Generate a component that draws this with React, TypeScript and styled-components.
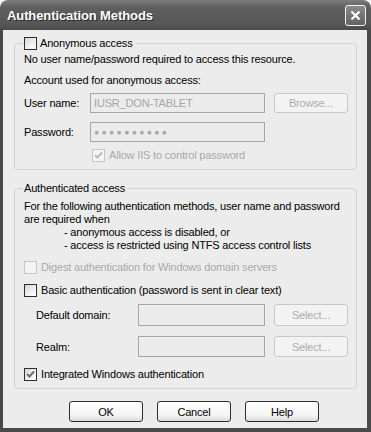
import styled, { createGlobalStyle } from "styled-components";

const GlobalStyle = createGlobalStyle`
  html, body {
    margin: 0;
    padding: 0;
    background: #ffffff;
  }
  body {
    font-family: "Liberation Sans", Arial, sans-serif;
    font-size: 11px;
    letter-spacing: -0.18px;
    color: #000;
  }
`;

const Window = styled.div`
  width: 371px;
  height: 432px;
  box-sizing: border-box;
  display: flex;
  flex-direction: column;
  background: linear-gradient(180deg, #7c7c7c 0px, #5e5e5e 8px, #575757 24px, #4a4a4a 30px);
  border-radius: 8px 8px 0 0;
  overflow: hidden;
`;

const TitleBar = styled.div`
  height: 30px;
  flex: 0 0 30px;
  display: flex;
  align-items: center;
  justify-content: space-between;
  padding: 0 5px 0 7px;
  box-sizing: border-box;
`;

const Title = styled.span`
  font-family: "Liberation Sans", Arial, sans-serif;
  font-weight: bold;
  font-size: 13px;
  letter-spacing: -0.1px;
  color: #ffffff;
  text-shadow: 1px 1px 0 #2a2a2a;
  padding-top: 1px;
`;

const CloseButton = styled.div`
  width: 21px;
  height: 21px;
  box-sizing: border-box;
  border: 1px solid #f4f4f4;
  border-radius: 3px;
  background: linear-gradient(180deg, #8a8a8a, #626262);
  display: flex;
  align-items: center;
  justify-content: center;
  margin-top: 1px;
`;

const Client = styled.div`
  flex: 1;
  margin: 0 4px 4px 3px;
  background: #ececec;
  padding: 7px 10px 0 11px;
  display: flex;
  flex-direction: column;
`;

const Group = styled.fieldset<{ $top?: number }>`
  margin: ${(p) => p.$top ?? 0}px 0 0 0;
  padding: 0 8px 7px 9px;
  border: 1px solid #d2d2d2;
  border-radius: 4px;
  display: flex;
  flex-direction: column;
  min-width: 0;
`;

const Legend = styled.legend`
  padding: 0 2px 0 1px;
  margin-left: -1px;
  height: 13px;
  line-height: 13px;
  display: flex;
  align-items: center;
  gap: 3px;
  color: #000;
`;

const Line = styled.div<{ $top: number; $indent?: number }>`
  margin-top: ${(p) => p.$top}px;
  margin-left: ${(p) => p.$indent ?? 0}px;
  line-height: 13px;
  height: 13px;
  white-space: nowrap;
`;

const Paragraph = styled.div<{ $top: number }>`
  margin-top: ${(p) => p.$top}px;
  line-height: 13px;
  white-space: nowrap;
`;

const CheckRow = styled.label<{ $top: number; $indent?: number; $disabled?: boolean }>`
  margin-top: ${(p) => p.$top}px;
  margin-left: ${(p) => p.$indent ?? 0}px;
  height: 13px;
  line-height: 13px;
  display: flex;
  align-items: center;
  gap: 4px;
  white-space: nowrap;
  color: ${(p) => (p.$disabled ? "#a9a9a9" : "#000")};
`;

const Box = styled.span<{ $disabled?: boolean }>`
  width: 13px;
  height: 13px;
  box-sizing: border-box;
  flex: 0 0 13px;
  border: 1px solid ${(p) => (p.$disabled ? "#c6c6c6" : "#2e2e2e")};
  background: ${(p) =>
    p.$disabled
      ? "#f4f4f4"
      : "linear-gradient(135deg, #d6d6d6 0%, #f2f2f2 60%, #ffffff 100%)"};
  display: flex;
  align-items: center;
  justify-content: center;
`;

const FieldRow = styled.div<{ $top: number; $height: number; $labelWidth: number; $indent?: number }>`
  margin-top: ${(p) => p.$top}px;
  margin-left: ${(p) => p.$indent ?? 0}px;
  height: ${(p) => p.$height}px;
  display: grid;
  grid-template-columns: ${(p) => p.$labelWidth}px 1fr 74px;
  column-gap: 9px;
  align-items: stretch;
`;

const FieldLabel = styled.span`
  display: flex;
  align-items: center;
  white-space: nowrap;
`;

const TextBox = styled.div`
  box-sizing: border-box;
  border: 1px solid #a6a6a6;
  background: #ececec;
  color: #a5a5a5;
  display: flex;
  align-items: center;
  padding-left: 3px;
  white-space: nowrap;
  overflow: hidden;
`;

const Dots = styled.span`
  font-size: 8.5px;
  letter-spacing: 2.4px;
  color: #a8a8a8;
`;

const Button = styled.div<{ $disabled?: boolean }>`
  box-sizing: border-box;
  width: 74px;
  border: 1px solid ${(p) => (p.$disabled ? "#c9c9c9" : "#2c2c2c")};
  border-radius: 3px;
  background: ${(p) =>
    p.$disabled ? "#f3f3f3" : "linear-gradient(180deg, #ffffff 0%, #f4f4f4 70%, #dcdcdc 100%)"};
  color: ${(p) => (p.$disabled ? "#acacac" : "#000")};
  display: flex;
  align-items: center;
  justify-content: center;
`;

const ButtonRow = styled.div`
  margin-top: 12px;
  padding-left: 55px;
  display: flex;
  gap: 14px;
  height: 21px;
`;

function Check({ checked, disabled }: { checked?: boolean; disabled?: boolean }) {
  return (
    <Box $disabled={disabled}>
      {checked && (
        <svg width="9" height="9" viewBox="0 0 9 9">
          <path
            d="M1 4 L3.5 6.5 L8 1.5"
            fill="none"
            stroke={disabled ? "#bdbdbd" : "#6e6e6e"}
            strokeWidth="2"
          />
        </svg>
      )}
    </Box>
  );
}

export default function App() {
  return (
    <>
      <GlobalStyle />
      <Window>
        <TitleBar>
          <Title>Authentication Methods</Title>
          <CloseButton>
            <svg width="11" height="11" viewBox="0 0 11 11">
              <path d="M1.5 1.5 L9.5 9.5 M9.5 1.5 L1.5 9.5" stroke="#ffffff" strokeWidth="2.2" />
            </svg>
          </CloseButton>
        </TitleBar>
        <Client>
          <Group>
            <Legend>
              <Check />
              <span>Anonymous access</span>
            </Legend>
            <Line $top={3}>No user name/password required to access this resource.</Line>
            <Line $top={8}>Account used for anonymous access:</Line>
            <FieldRow $top={6} $height={20} $labelWidth={57}>
              <FieldLabel>User name:</FieldLabel>
              <TextBox>IUSR_DON-TABLET</TextBox>
              <Button $disabled>Browse...</Button>
            </FieldRow>
            <FieldRow $top={9} $height={20} $labelWidth={57}>
              <FieldLabel>Password:</FieldLabel>
              <TextBox>
                <Dots>●●●●●●●●●●</Dots>
              </TextBox>
              <span />
            </FieldRow>
            <CheckRow $top={7} $indent={68} $disabled>
              <Check checked disabled />
              Allow IIS to control password
            </CheckRow>
          </Group>

          <Group $top={12}>
            <Legend>Authenticated access</Legend>
            <Paragraph $top={5}>
              For the following authentication methods, user name and password
              <br />
              are required when
            </Paragraph>
            <Line $top={0} $indent={40}>- anonymous access is disabled, or</Line>
            <Line $top={0} $indent={40}>- access is restricted using NTFS access control lists</Line>
            <CheckRow $top={9} $disabled>
              <Check disabled />
              Digest authentication for Windows domain servers
            </CheckRow>
            <CheckRow $top={10}>
              <Check />
              Basic authentication (password is sent in clear text)
            </CheckRow>
            <FieldRow $top={7} $height={22} $labelWidth={93} $indent={12}>
              <FieldLabel>Default domain:</FieldLabel>
              <TextBox />
              <Button $disabled>Select...</Button>
            </FieldRow>
            <FieldRow $top={10} $height={21} $labelWidth={93} $indent={12}>
              <FieldLabel>Realm:</FieldLabel>
              <TextBox />
              <Button $disabled>Select...</Button>
            </FieldRow>
            <CheckRow $top={11}>
              <Check checked />
              Integrated Windows authentication
            </CheckRow>
          </Group>

          <ButtonRow>
            <Button>OK</Button>
            <Button>Cancel</Button>
            <Button>Help</Button>
          </ButtonRow>
        </Client>
      </Window>
    </>
  );
}
